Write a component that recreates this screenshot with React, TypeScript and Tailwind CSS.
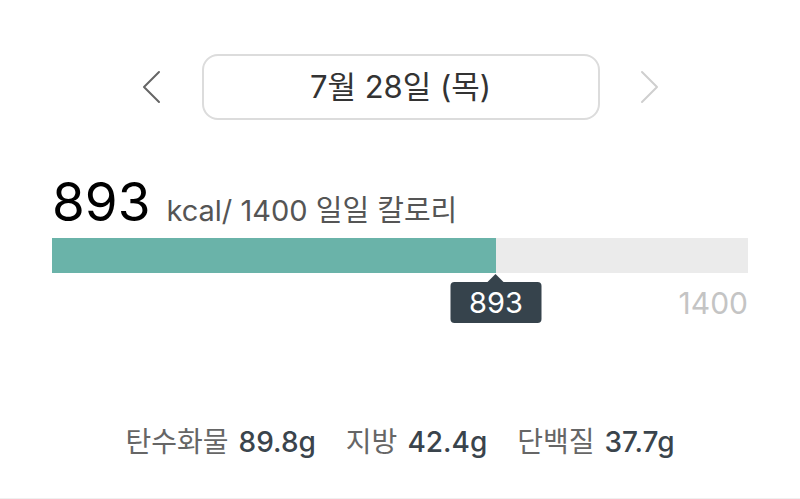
import React from 'react';

const consumed = 893;
const goal = 1400;

const macros = [
  { label: '탄수화물', value: '89.8g' },
  { label: '지방', value: '42.4g' },
  { label: '단백질', value: '37.7g' },
];

function Chevron({ dir, className }: { dir: 'left' | 'right'; className?: string }) {
  return (
    <svg width="20" height="34" viewBox="0 0 20 34" fill="none" className={className}>
      <path
        d={dir === 'left' ? 'M18 2 L3 17 L18 32' : 'M2 2 L17 17 L2 32'}
        stroke="currentColor"
        strokeWidth="2"
        strokeLinecap="round"
        strokeLinejoin="round"
      />
    </svg>
  );
}

export default function App() {
  const pct = (consumed / goal) * 100;

  return (
    <div
      className="w-[800px] h-[499px] bg-white border-b border-[#f0f0f0] flex flex-col"
      style={{ fontFamily: 'Inter, "Noto Sans CJK KR", sans-serif' }}
    >
      {/* date picker */}
      <div className="flex items-center justify-center mt-[54px]">
        <button className="text-[#666] mr-[41px]">
          <Chevron dir="left" />
        </button>
        <div className="w-[398px] h-[66px] rounded-[16px] border-2 border-[#dcdcdc] flex items-center justify-center text-[31px] text-[#333]">
          7월 28일 (목)
        </div>
        <button className="text-[#cfcfcf] ml-[40px]">
          <Chevron dir="right" />
        </button>
      </div>

      {/* calories */}
      <div className="px-[52px] mt-[56px]">
        <div className="flex items-baseline leading-none">
          <span className="text-[53px] text-black">{consumed}</span>
          <span className="text-[29px] text-[#555] ml-[16px]">kcal/ {goal} 일일 칼로리</span>
        </div>
        <div className="mt-[9px] h-[35px] bg-[#ebebeb]">
          <div className="h-full bg-[#6ab3a9]" style={{ width: `${pct}%` }} />
        </div>
        <div className="relative h-[50px]">
          <div
            className="absolute top-[9px] -translate-x-1/2 bg-[#36434c] rounded-[4px] w-[91px] h-[41px] flex items-center justify-center text-white text-[29px]"
            style={{ left: `${pct}%` }}
          >
            <div className="absolute -top-[8px] left-1/2 -translate-x-1/2 w-0 h-0 border-x-[8px] border-x-transparent border-b-[8px] border-b-[#36434c]" />
            {consumed}
          </div>
          <div className="absolute right-0 top-[15px] text-[30px] text-[#c4c4c4] leading-none">{goal}</div>
        </div>
      </div>

      {/* macros */}
      <div className="flex justify-center gap-[30px] mt-[105px] text-[28px] leading-none">
        {macros.map((m) => (
          <div key={m.label} className="flex items-baseline gap-[10px]">
            <span className="text-[#666]">{m.label}</span>
            <span className="text-[#3a444c] font-medium">{m.value}</span>
          </div>
        ))}
      </div>
    </div>
  );
}
